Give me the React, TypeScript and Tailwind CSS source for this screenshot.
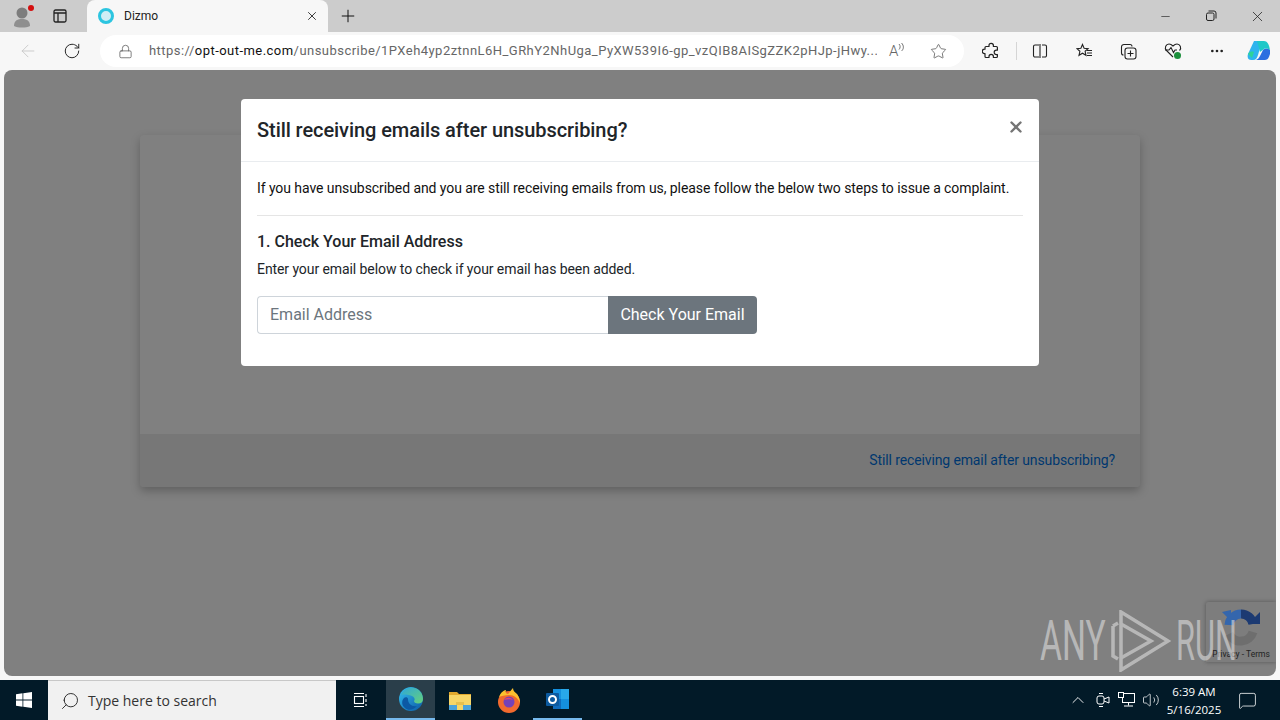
import { ArrowLeft, RotateCw, Lock, Star, Plus, X, Minus, MoreHorizontal, Search, ChevronUp, Volume2, MessageSquare } from "lucide-react";

function EdgeIcon() {
  return (
    <svg width="26" height="26" viewBox="0 0 26 26">
      <defs>
        <linearGradient id="eg1" x1="0" y1="0" x2="1" y2="1">
          <stop offset="0" stopColor="#35c1f1" />
          <stop offset="1" stopColor="#0c59a4" />
        </linearGradient>
        <linearGradient id="eg2" x1="0" y1="0" x2="1" y2="1">
          <stop offset="0" stopColor="#2fa7d8" />
          <stop offset="1" stopColor="#66d17a" />
        </linearGradient>
      </defs>
      <circle cx="13" cy="13" r="12" fill="url(#eg1)" />
      <path d="M3 9C6 2 13 0.5 18 2.5c5 2 7 6.5 7 10.5 0 3-2 4.5-5 4.5-2.5 0-4-1-4-2.5 1-1 1-3-1-4.5C11 8.500 5 8 3 9z" fill="url(#eg2)" />
      <path d="M10 13c0 5 4 8 9 7-3 4-9 5-12 2-3-2-4-7-1-10 1-1 4-1 4 1z" fill="#0c59a4" />
    </svg>
  );
}

function FolderIcon() {
  return (
    <svg width="24" height="22" viewBox="0 0 24 22">
      <path d="M1 3h8l2 2h12v3H1z" fill="#e2a92e" />
      <rect x="1" y="6" width="22" height="15" fill="#f8d667" />
      <rect x="1" y="16" width="22" height="5" fill="#4da3d9" />
      <rect x="8" y="13" width="8" height="3" fill="#e8c04e" />
      <rect x="9" y="16" width="6" height="5" fill="#f8d667" />
    </svg>
  );
}

function FirefoxIcon() {
  return (
    <svg width="24" height="26" viewBox="0 0 24 26">
      <circle cx="12" cy="15" r="11" fill="#f26a2e" />
      <path d="M2 10C4 5 7 3 9 3c-1 2 0 4 2 4 2-2 3-4 5-6 0 3 2 4 4 6 2 3 3 6 3 9-2-5-6-8-11-8-4 0-8 1-10 2z" fill="#fcc02e" />
      <circle cx="12" cy="15" r="5.500" fill="#7542b8" />
      <path d="M7 13c2-3 7-3 9 0-2-1-6-1-9 0z" fill="#e8486a" />
    </svg>
  );
}

function OutlookIcon() {
  return (
    <svg width="26" height="24" viewBox="0 0 26 24">
      <rect x="8" y="2" width="16" height="20" fill="#1490df" />
      <rect x="16" y="2" width="8" height="10" fill="#28a8ea" />
      <rect x="8" y="12" width="8" height="10" fill="#0f6cbd" />
      <rect x="1" y="6" width="13" height="13" rx="1" fill="#0c5a9f" />
      <circle cx="7.500" cy="12.500" r="3.500" fill="none" stroke="#fff" strokeWidth="2" />
    </svg>
  );
}

function CopilotIcon() {
  return (
    <svg width="26" height="26" viewBox="0 0 26 26">
      <path d="M8 3h8l-4 14c-1 3-2 5-5 5H5C2 22 1 19 2 16z" fill="#2fb4ee" />
      <path d="M10 22h9c3 0 4-3 5-6l0-4c-2-2-5-2-7 0l-3 6c-1 2-2 3-4 4z" fill="#2b6fe0" />
      <path d="M11 3h7c3 0 5 3 6 9-1-1-4-2-6-1l-4 3z" fill="#1fc8c8" />
      <path d="M2 16c1-2 3-3 6-2l-2 6z" fill="#2fd39a" />
    </svg>
  );
}

function AnyRunLogo() {
  return (
    <div className="absolute left-[1036px] top-[540px] flex items-center opacity-60 pointer-events-none">
      <span className="w-[70px] text-[56px] leading-none text-[#dddddd] font-['Roboto',sans-serif] scale-x-[0.6] origin-left">ANY</span>
      <svg width="62" height="62" viewBox="0 0 62 62" fill="none" stroke="#dddddd" strokeWidth="3.500">
        <path d="M3 16v30l5 3M3 16l5-3" />
        <path d="M11 2l47 29-47 29z" />
        <path d="M11 14l30 17-30 17" />
      </svg>
      <span className="w-[62px] ml-[4px] text-[56px] leading-none text-[#dddddd] font-['Roboto',sans-serif] scale-x-[0.55] origin-left">RUN</span>
    </div>
  );
}

export default function App() {
  return (
    <div className="w-[1280px] h-[720px] overflow-hidden flex flex-col bg-[#f7f7f7] font-['Roboto',sans-serif]">
      {/* tab strip */}
      <div className="h-[32px] bg-[#cccccc] flex items-end shrink-0">
        <div className="w-[87px] h-[32px] flex items-center relative">
          <svg width="22" height="24" viewBox="0 0 22 24" className="ml-[11px]">
            <circle cx="11" cy="9" r="5.500" fill="#7d7d7d" />
            <path d="M3 22c0-6 4-7 8-7s8 1 8 7c-4 2-12 2-16 0z" fill="#8f8f8f" />
          </svg>
          <span className="absolute left-[28px] top-[5px] w-[6px] h-[6px] rounded-full bg-[#d40f0f]" />
          <svg width="14" height="14" viewBox="0 0 14 14" fill="none" stroke="#222" strokeWidth="1.300" className="ml-[20px]">
            <rect x="1" y="1" width="12" height="12" rx="1.500" />
            <path d="M1 4h12M5 4v9" />
          </svg>
        </div>
        <div className="w-[241px] h-[32px] bg-[#f7f7f7] rounded-t-[8px] flex items-center pl-[11px] pr-[9px]">
          <span className="w-[16px] h-[16px] rounded-full border-[3px] border-[#2cc5e0] bg-[#cfeef5]" />
          <span className="ml-[10px] text-[12px] text-[#222] flex-1">Dizmo</span>
          <X size={14} strokeWidth={1.500} className="text-[#222]" />
        </div>
        <div className="w-[40px] h-[32px] flex items-center justify-center">
          <Plus size={20} strokeWidth={1.200} className="text-[#111]" />
        </div>
        <div className="flex-1" />
        <div className="flex items-center h-[32px] text-[#222]">
          <div className="w-[46px] flex justify-center"><Minus size={13} strokeWidth={1.200} /></div>
          <div className="w-[46px] flex justify-center">
            <svg width="12" height="12" viewBox="0 0 12 12" fill="none" stroke="#222" strokeWidth="1">
              <rect x="1.500" y="3" width="7.500" height="7.500" rx="1.500" />
              <path d="M3.500 1h5.500a2 2 0 0 1 2 2v5.500" />
            </svg>
          </div>
          <div className="w-[46px] flex justify-center"><X size={17} strokeWidth={1.100} /></div>
        </div>
      </div>

      {/* toolbar */}
      <div className="h-[38px] shrink-0 bg-[#f7f7f7] flex items-center">
        <div className="w-[56px] flex justify-center"><ArrowLeft size={20} strokeWidth={1} className="text-[#c4c4c4]" /></div>
        <div className="w-[32px] flex justify-center"><RotateCw size={18} strokeWidth={1.300} className="text-[#222]" /></div>
        <div className="ml-[12px] w-[864px] h-[32px] bg-white rounded-full flex items-center pl-[18px] pr-[17px]">
          <Lock size={15} strokeWidth={1.200} className="text-[#555] shrink-0" />
          <div className="ml-[16px] w-[728px] shrink-0 text-[13px] whitespace-nowrap overflow-hidden text-[#666] tracking-[0.46px]">
            https://<span className="text-[#111]">opt-out-me.com</span>/unsubscribe/1PXeh4yp2ztnnL6H_GRhY2NhUga_PyXW539I6-gp_vzQIB8AISgZZK2pHJp-jHwy...
          </div>
          <div className="ml-[12px] w-[18px] flex items-start text-[#666]">
            <span className="text-[15px] leading-none font-light">A</span>
            <svg width="6" height="9" viewBox="0 0 6 9" fill="none" stroke="#666" strokeWidth="0.900" className="-mt-[1px]">
              <path d="M1 1c1.500 1.500 1.500 4 0 5.500M3.500 0c2.500 2.500 2.500 6 0 8" />
            </svg>
          </div>
          <Star size={17} strokeWidth={1.100} className="ml-[23px] text-[#555] shrink-0" />
        </div>
        <div className="ml-[18px] w-[18px]">
          <svg width="18" height="18" viewBox="0 0 18 18" fill="none" stroke="#222" strokeWidth="1.200" strokeLinejoin="round">
            <path d="M7 3.500a2.200 2.200 0 0 1 4.400 0V4.500h3a1 1 0 0 1 1 1v2.700h-1a2.200 2.200 0 0 0 0 4.400h1v1.900a1 1 0 0 1-1 1h-3v-1a2.200 2.200 0 0 0-4.400 0v1H4a1 1 0 0 1-1-1v-2.900H2.500a2.200 2.200 0 0 1 0-4.400H3V5.500a1 1 0 0 1 1-1h3z" />
          </svg>
        </div>
        <div className="ml-[16px] w-px h-[18px] bg-[#d5d5d5]" />
        <div className="ml-[15px] w-[16px]">
          <svg width="16" height="16" viewBox="0 0 16 16" fill="none" stroke="#222" strokeWidth="1.100">
            <path d="M7 2H3a1.500 1.500 0 0 0-1.500 1.500v9A1.500 1.500 0 0 0 3 14h4M10 2h3a1.500 1.500 0 0 1 1.500 1.500v9A1.500 1.500 0 0 1 13 14h-3M8 1v14" />
          </svg>
        </div>
        <div className="ml-[28px] w-[17px]">
          <svg width="17" height="16" viewBox="0 0 17 16" fill="none" stroke="#222" strokeWidth="1.100">
            <path d="M6.500 1.500l1.600 3.700 4 .4-3 2.700.9 4-3.500-2.100-3.500 2.100.9-4-3-2.700 4-.4z" />
            <path d="M11 7.500h5M11 10h5M11 12.500h5" />
          </svg>
        </div>
        <div className="ml-[27px] w-[17px]">
          <svg width="17" height="17" viewBox="0 0 17 17" fill="none" stroke="#222" strokeWidth="1.100">
            <rect x="5" y="5" width="11" height="11" rx="2.500" />
            <path d="M10.500 7.500v6M7.500 10.500h6" />
            <path d="M12 3.500A2 2 0 0 0 10 1.500H4A2.500 2.500 0 0 0 1.500 4v6A2 2 0 0 0 3.500 12" />
          </svg>
        </div>
        <div className="ml-[27px] w-[18px] relative">
          <svg width="18" height="18" viewBox="0 0 18 18" fill="none" stroke="#222" strokeWidth="1.100">
            <path d="M9 15L2.500 8.500C0 6 2 2 5 2c2 0 3 1 4 2 1-1 2-2 4-2 3 0 5 4 2.500 6.500" />
            <path d="M1 8h4l2-2.500 2.500 5L11 8h2" />
          </svg>
          <span className="absolute left-[10px] top-[10px] w-[7px] h-[7px] rounded-full bg-[#1c8f3c]" />
        </div>
        <div className="ml-[27px] w-[16px]"><MoreHorizontal size={16} strokeWidth={2} className="text-[#222]" /></div>
        <div className="ml-[21px] w-[26px]"><CopilotIcon /></div>
      </div>

      {/* page */}
      <div className="flex-1 min-h-0 px-[4px] pb-[4px] bg-[#f7f7f7]">
        <div className="relative h-full rounded-[8px] bg-[#808080] overflow-hidden flex flex-col items-center pt-[65px]">
          <div className="w-[1000px] h-[352px] rounded-[4px] bg-[#808080] shadow-[0_4px_10px_rgba(0,0,0,0.25)] flex flex-col justify-end">
            <div className="h-[53px] bg-[#777777] rounded-b-[4px] flex items-center justify-end pr-[25px] text-[14px] tracking-[-0.12px] text-[#00376f]">
              Still receiving email after unsubscribing?
            </div>
          </div>

          <div className="absolute left-[1202px] top-[532px] w-[70px] h-[60px] bg-[#7d7d7d] shadow-[0_0_4px_rgba(0,0,0,0.35)] rounded-tl-[2px] flex flex-col items-center">
            <svg width="38" height="38" viewBox="0 0 38 38" fill="none" strokeWidth="9" className="mt-[6px]">
              <path d="M7 17A12 12 0 0 1 19 6" stroke="#3566ad" />
              <path d="M0 4l9-2v11z" fill="#3566ad" />
              <path d="M19 6A12 12 0 0 1 31 16" stroke="#1c3a72" />
              <path d="M38 4v12H26z" fill="#1c3a72" />
              <path d="M31 24A13 13 0 0 1 7 26" stroke="#6e6e6e" />
            </svg>
            <span className="text-[8.5px] leading-none text-[#222] mt-[4px] whitespace-nowrap">Privacy - Terms</span>
          </div>

          <AnyRunLogo />

          {/* modal */}
          <div className="absolute left-[237px] top-[29px] w-[798px] h-[267px] bg-white rounded-[4px] text-[#212529]">
            <div className="h-[63px] border-b border-[#e9ecef] flex justify-between px-[16px]">
              <h5 className="text-[20px] font-medium leading-[30px] pt-[16px] tracking-[-0.07px]">Still receiving emails after unsubscribing?</h5>
              <span className="text-[#757575] mt-[19px] -mr-[2px]"><X size={18} strokeWidth={3.200} /></span>
            </div>
            <div className="px-[16px] pt-[16px]">
              <p className="text-[14px] leading-[21px] tracking-[-0.075px] text-[#111]">If you have unsubscribed and you are still receiving emails from us, please follow the below two steps to issue a complaint.</p>
              <div className="h-px bg-[#e5e5e5] mt-[16px]" />
              <h6 className="text-[16px] font-medium leading-[19px] mt-[16px]">1. Check Your Email Address</h6>
              <p className="text-[14px] leading-[21px] tracking-[-0.08px] mt-[8px]">Enter your email below to check if your email has been added.</p>
              <div className="flex mt-[16px] w-[500px] h-[38px]">
                <div className="flex-1 border border-[#ced4da] border-r-0 rounded-l-[4px] px-[12px] flex items-center text-[16px] text-[#6c757d]">Email Address</div>
                <div className="w-[149px] bg-[#6c757d] rounded-r-[4px] flex items-center justify-center text-[16px] text-white">Check Your Email</div>
              </div>
            </div>
          </div>
        </div>
      </div>

      {/* taskbar */}
      <div className="h-[40px] shrink-0 bg-[#021a28] flex items-stretch text-white">
        <div className="w-[48px] flex items-center justify-center">
          <svg width="16" height="16" viewBox="0 0 16 16" fill="#fff">
            <path d="M0 2.200l6.500-.9v6.300H0zM7.300 1.200L16 0v7.600H7.300zM0 8.400h6.500v6.300L0 13.800zM7.300 8.400H16V16l-8.700-1.200z" />
          </svg>
        </div>
        <div className="w-[288px] bg-[#f1f1f1] border-t border-[#c8c8c8] flex items-center pl-[12px] text-[#222]">
          <Search size={20} strokeWidth={1.100} className="-scale-x-100" />
          <span className="ml-[8px] text-[14px] font-['Open_Sans',sans-serif] text-[#333]">Type here to search</span>
        </div>
        <div className="w-[50px] flex items-center justify-center">
          <svg width="16" height="16" viewBox="0 0 16 16" fill="none" stroke="#fff" strokeWidth="1.100">
            <rect x="1.500" y="4.500" width="9" height="7" />
            <path d="M1 1.500h10M1 14.500h10M13 2v3M13 7v3M13 12v2" />
          </svg>
        </div>
        <div className="w-[49px] bg-[#2a3e4a] border-b-[2px] border-[#76b9ed] flex items-center justify-center"><EdgeIcon /></div>
        <div className="w-[49px] flex items-center justify-center"><FolderIcon /></div>
        <div className="w-[49px] flex items-center justify-center"><FirefoxIcon /></div>
        <div className="w-[49px] border-b-[2px] border-[#76b9ed] flex items-center justify-center"><OutlookIcon /></div>
        <div className="flex-1" />
        <div className="flex items-center">
          <ChevronUp size={20} strokeWidth={1.100} />
          <svg width="14" height="16" viewBox="0 0 14 16" fill="none" stroke="#fff" strokeWidth="1" className="ml-[8px]">
            <rect x="1" y="4" width="7" height="8" rx="2" />
            <path d="M8 7l5-2v6l-5-2M3 1.500h4M3 14.500h4" />
          </svg>
          <svg width="17" height="16" viewBox="0 0 17 16" fill="none" stroke="#fff" strokeWidth="1" className="ml-[8px]">
            <rect x="4.500" y="1.500" width="12" height="9" />
            <rect x="0.500" y="0.500" width="5" height="5" fill="#021a28" />
            <path d="M10.500 10.500v3M6 14h9" />
          </svg>
          <Volume2 size={18} strokeWidth={1} className="ml-[7px]" />
          <div className="w-[62px] ml-[3px] pt-[2px] flex flex-col items-center text-[11.5px] leading-[18px] font-['Open_Sans',sans-serif]">
            <span>6:39 AM</span>
            <span>5/16/2025</span>
          </div>
          <div className="w-[40px] ml-[2px] mr-[13px] flex justify-center"><MessageSquare size={19} strokeWidth={1} /></div>
        </div>
      </div>
    </div>
  );
}
